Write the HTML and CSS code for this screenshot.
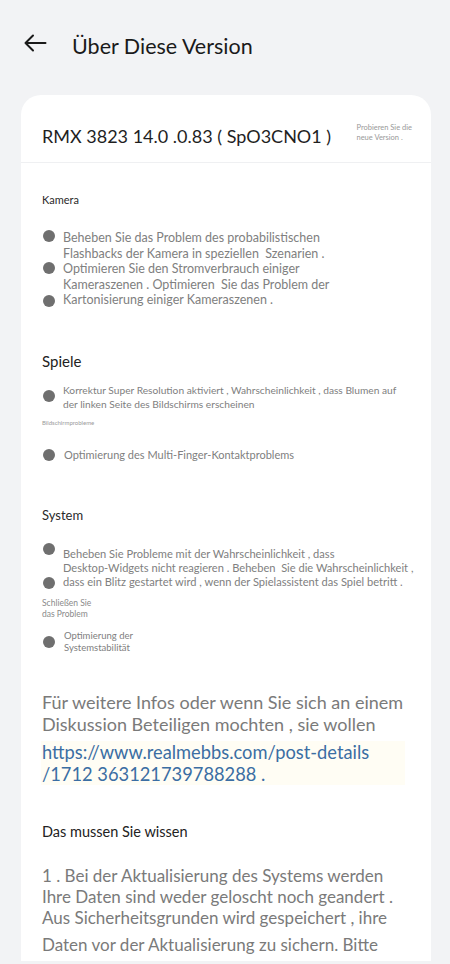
FILE: index.html
```html
<!DOCTYPE html>
<html lang="de">
<head>
<meta charset="utf-8">
<title>Über Diese Version</title>
<link rel="stylesheet" href="styles.css">
</head>
<body>
<header class="topbar">
  <svg class="back" width="24" height="24" viewBox="0 0 24 24" aria-hidden="true">
    <path d="M22.5 12H2.5M10 4.5L2.5 12L10 19.5" fill="none" stroke="#1a1a1a" stroke-width="2" stroke-linecap="round" stroke-linejoin="round"/>
  </svg>
  <h1 class="title">Über Diese Version</h1>
</header>
<main class="card">
  <div class="card-head">
    <h2 class="version">RMX 3823 14.0 .0.83 ( SpO3CNO1 )</h2>
    <p class="try">Probieren Sie die<br>neue Version .</p>
  </div>

  <h3 class="lbl-kamera">Kamera</h3>
  <div class="item item-kamera">
    <div class="dots"><span class="dot"></span><span class="dot"></span><span class="dot"></span></div>
    <p class="txt">Beheben Sie das Problem des probabilistischen<br>Flashbacks der Kamera in speziellen&nbsp; Szenarien .<br>Optimieren Sie den Stromverbrauch einiger<br>Kameraszenen . Optimieren&nbsp; Sie das Problem der<br>Kartonisierung einiger Kameraszenen .</p>
  </div>

  <h3 class="lbl-spiele">Spiele</h3>
  <div class="item item-spiele1">
    <div class="dots"><span class="dot"></span></div>
    <p class="txt">Korrektur Super Resolution aktiviert , Wahrscheinlichkeit , dass Blumen auf<br>der linken Seite des Bildschirms erscheinen</p>
  </div>
  <p class="tiny">Bildschirmprobleme</p>
  <div class="item item-spiele2">
    <div class="dots"><span class="dot"></span></div>
    <p class="txt">Optimierung des Multi-Finger-Kontaktproblems</p>
  </div>

  <h3 class="lbl-system">System</h3>
  <div class="item item-system1">
    <div class="dots"><span class="dot"></span><span class="dot"></span></div>
    <p class="txt">Beheben Sie Probleme mit der Wahrscheinlichkeit , dass<br>Desktop-Widgets nicht reagieren . Beheben&nbsp; Sie die Wahrscheinlichkeit ,<br>dass ein Blitz gestartet wird , wenn der Spielassistent das Spiel betritt .</p>
  </div>
  <p class="note">Schließen Sie<br>das Problem</p>
  <div class="item item-system2">
    <div class="dots"><span class="dot"></span></div>
    <p class="txt">Optimierung der<br>Systemstabilität</p>
  </div>

  <p class="info">Für weitere Infos oder wenn Sie sich an einem<br>Diskussion Beteiligen mochten , sie wollen</p>
  <p class="link">https://www.realmebbs.com/post-details<br>/1712 363121739788288 .</p>

  <h3 class="lbl-wissen">Das mussen Sie wissen</h3>
  <p class="know">1 . Bei der Aktualisierung des Systems werden<br>Ihre Daten sind weder geloscht noch geandert .<br>Aus Sicherheitsgrunden wird gespeichert , ihre</p>
  <p class="know know-last">Daten vor der Aktualisierung zu sichern. Bitte</p>
</main>
</body>
</html>
```

FILE: styles.css
```css
* { box-sizing: border-box; }
html, body { margin: 0; padding: 0; }
body {
  width: 450px;
  height: 964px;
  overflow: hidden;
  background: #f2f3f5;
  font-family: "Lato", "Noto Sans", sans-serif;
  color: #7a7a7a;
}
h1, h2, h3, p { margin: 0; font-weight: normal; }

.topbar {
  height: 95px;
  display: flex;
  align-items: flex-start;
  padding-top: 31px;
  padding-left: 23px;
}
.back { display: block; }
.title {
  margin-left: 25px;
  font-size: 21.5px;
  line-height: 28px;
  color: #1a1a1a;
  margin-top: 1px;
}

.card {
  margin-left: 21px;
  width: 410px;
  height: 866px;
  background: #fff;
  border-radius: 20px 20px 0 0;
  padding: 0 21px;
  white-space: nowrap;
}
.card-head {
  height: 68px;
  margin: 0 -21px;
  padding: 14px 19px 0 21px;
  border-bottom: 1px solid #eff0f2;
  display: flex;
  align-items: center;
  justify-content: space-between;
}
.version {
  font-size: 18px;
  color: #1f1f1f;
}
.try {
  font-size: 7.5px;
  line-height: 10px;
  color: #9a9a9a;
  margin-top: -6px;
}

.lbl-kamera { font-size: 11px; line-height: 16px; margin-top: 29px; color: #2a2a2a; }
.lbl-spiele { font-size: 15px; line-height: 20px; margin-top: 43px; color: #222; }
.lbl-system { font-size: 13px; line-height: 18px; margin-top: 43px; color: #2a2a2a; }
.lbl-wissen { font-size: 14.5px; line-height: 20px; margin-top: 37px; color: #222; }

.item { display: flex; }
.dots {
  width: 21px;
  flex: none;
  display: flex;
  flex-direction: column;
  justify-content: space-between;
  padding-left: 1px;
}
.dot {
  display: block;
  width: 12px;
  height: 12px;
  border-radius: 50%;
  background: #6f6f6f;
}
.txt { color: #808080; }

.item-kamera { margin-top: 22px; }
.item-kamera .txt { font-size: 12.5px; line-height: 15.5px; }
.item-kamera .dots { margin-top: 0; margin-bottom: 1px; }

.item-spiele1 { margin-top: 12px; }
.item-spiele1 .txt { font-size: 10.2px; line-height: 14px; }
.item-spiele1 .dots { justify-content: center; padding-bottom: 2px; }

.tiny { font-size: 6px; line-height: 8px; margin-top: 8px; color: #9a9a9a; }

.item-spiele2 { margin-top: 20px; }
.item-spiele2 .txt { font-size: 11px; line-height: 16px; padding-left: 1px; }
.item-spiele2 .dots { justify-content: center; }

.item-system1 { margin-top: 23px; }
.item-system1 .txt { font-size: 11.1px; line-height: 14px; }
.item-system1 .dots { margin-top: -4px; margin-bottom: 0; }

.note { font-size: 8.5px; line-height: 11.5px; margin-top: 9px; color: #8a8a8a; }

.item-system2 { margin-top: 9px; }
.item-system2 .txt { font-size: 9.5px; line-height: 12px; padding-left: 1px; }
.item-system2 .dots { justify-content: center; }

.info { font-size: 18px; line-height: 22px; margin-top: 37px; color: #7a7a7a; }
.link {
  margin-top: 6px;
  margin-left: -1px;
  width: 364px;
  padding-left: 1px;
  font-size: 18.3px;
  line-height: 22px;
  color: #3b6ea3;
  background: #fffdf4;
}
.know { font-size: 17px; line-height: 21px; margin-top: 23px; color: #7a7a7a; }
.know-last { margin-top: 6px; }
```
